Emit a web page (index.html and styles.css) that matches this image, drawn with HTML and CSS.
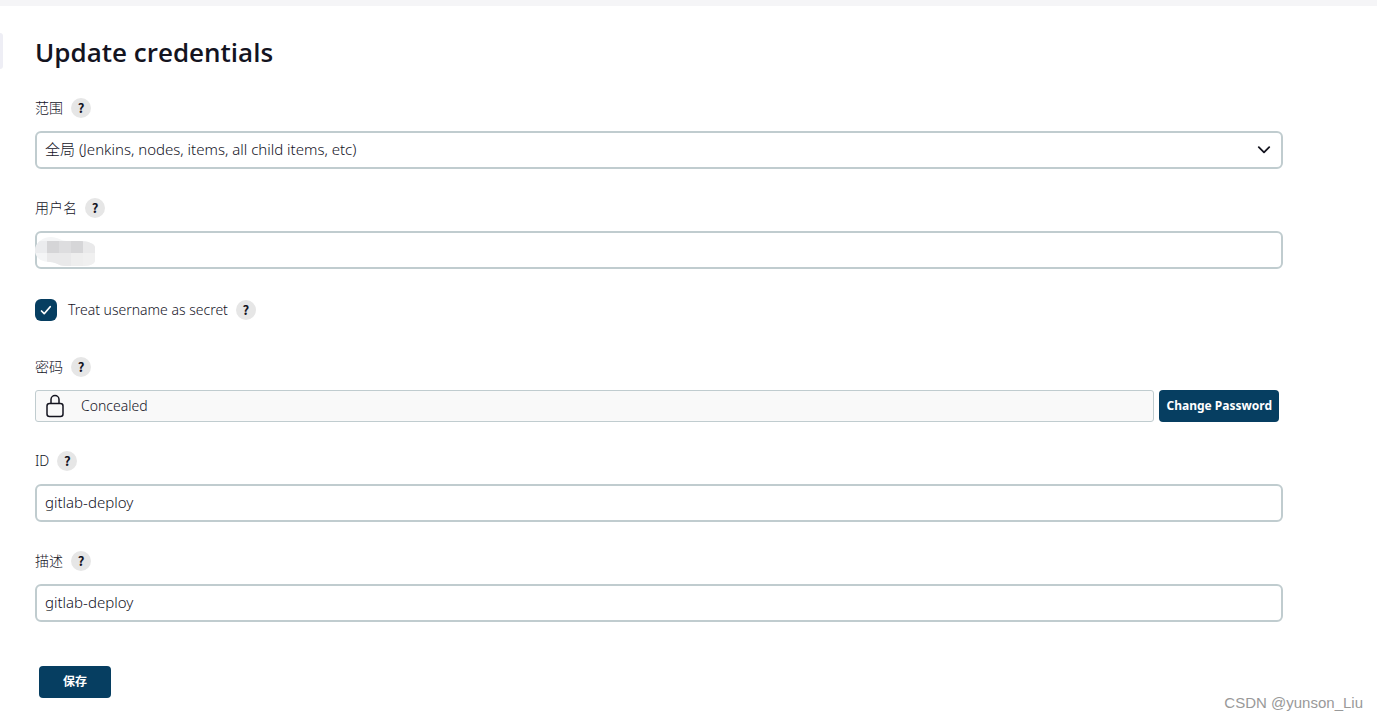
FILE: index.html
```html
<!DOCTYPE html>
<html lang="zh-CN">
<head>
<meta charset="utf-8">
<title>Update credentials</title>
<link rel="stylesheet" href="styles.css">
</head>
<body>
<div class="topbar"></div>
<div class="side-tab"></div>
<main class="page">
  <h1 class="title">Update credentials</h1>
  <form class="form">
    <div class="field">
      <div class="label-row"><label for="scope">范围</label><button type="button" class="help" aria-label="Help">?</button></div>
      <div class="control-wrap">
        <select id="scope" class="control"><option>全局 (Jenkins, nodes, items, all child items, etc)</option></select>
        <svg class="chevron" width="14" height="8" viewBox="0 0 14 8" fill="none" stroke="#14141f" stroke-width="1.8" stroke-linecap="round" stroke-linejoin="round"><path d="M1.800 1.200l5.200 5.200 5.200-5.200"/></svg>
      </div>
    </div>
    <div class="field">
      <div class="label-row"><label for="username">用户名</label><button type="button" class="help" aria-label="Help">?</button></div>
      <div class="control-wrap">
        <input id="username" class="control" type="text">
        <svg class="mosaic" width="60" height="30" viewBox="0 0 60 30">
          <defs><clipPath id="smear"><path d="M0 13C1 4 9 0 16 0c7 0 10 4 16 4h14c7 0 14 3 14 6v14c-1 4-7 5-12 5H30c-6 0-9-4-15-4C6 25 0 21 0 13z"/></clipPath></defs>
          <g clip-path="url(#smear)" shape-rendering="crispEdges">
            <path fill="#f4f5f6" d="M0 0h60v30H0z"/>
            <path fill="#ebecee" d="M0 4h12v12H0z"/>
            <path fill="#d5d5d7" d="M12 4h12v12H12z"/>
            <path fill="#dddddf" d="M24 4h12v12H24z"/>
            <path fill="#d6d6d8" d="M36 4h12v12H36z"/>
            <path fill="#e9e9ea" d="M48 4h12v12H48zM12 16h24v14H12z"/>
            <path fill="#eeeeee" d="M36 16h12v14H36z"/>
            <path fill="#f0f0f0" d="M48 16h12v14H48z"/>
          </g>
        </svg>
      </div>
    </div>
    <div class="check-row">
      <input id="secret" class="checkbox" type="checkbox" checked>
      <svg class="tick" width="22" height="22" viewBox="0 0 22 22" fill="none" stroke="#fff" stroke-width="1.7" stroke-linecap="round" stroke-linejoin="round"><path d="M6.500 12l2.700 2.700 6-7"/></svg>
      <label for="secret" class="check-label">Treat username as secret</label>
      <button type="button" class="help" aria-label="Help">?</button>
    </div>
    <div class="field">
      <div class="label-row"><label for="change">密码</label><button type="button" class="help" aria-label="Help">?</button></div>
      <div class="secret-row">
        <div class="concealed">
          <svg width="18" height="24" viewBox="0 0 18 24" fill="none" stroke="#14141f" stroke-width="1.5"><rect x="1" y="9.500" width="16" height="13" rx="2.500"/><path d="M5 9.500V5.500a4 4 0 0 1 8 0v4"/></svg>
          <span>Concealed</span>
        </div>
        <button id="change" type="button" class="btn btn-change">Change Password</button>
      </div>
    </div>
    <div class="field">
      <div class="label-row"><label for="cid">ID</label><button type="button" class="help" aria-label="Help">?</button></div>
      <input id="cid" class="control" type="text" value="gitlab-deploy">
    </div>
    <div class="field">
      <div class="label-row"><label for="desc">描述</label><button type="button" class="help" aria-label="Help">?</button></div>
      <input id="desc" class="control" type="text" value="gitlab-deploy">
    </div>
    <button type="submit" class="btn btn-save">保存</button>
  </form>
</main>
<div class="watermark">CSDN @yunson_Liu</div>
</body>
</html>
```
FILE: styles.css
```css
* { box-sizing: border-box; }
body {
  margin: 0;
  background: #fff;
  color: #14141f;
  font-family: "Noto Sans", "Noto Sans CJK SC", sans-serif;
  font-size: 14px;
  font-weight: 300;
  line-height: 20px;
}
.topbar { height: 6px; background: #f5f5f7; }
.side-tab {
  position: absolute;
  left: 0;
  top: 33px;
  width: 3px;
  height: 36px;
  background: #eeeef5;
  border-radius: 0 8px 8px 0;
}
.page { padding: 28px 94px 22px 35px; }
.title {
  margin: 0 0 28px;
  font-family: "Open Sans", "Noto Sans", sans-serif;
  font-size: 26px;
  font-weight: 600;
  line-height: 36px;
}
.field { margin-bottom: 29px; }
.label-row {
  display: flex;
  align-items: center;
  gap: 8px;
  margin-bottom: 13px;
}
.help {
  width: 20px;
  height: 20px;
  padding: 0;
  border: 0;
  border-radius: 50%;
  background: #e6e6e6;
  color: #14141f;
  font: 700 13px/20px "Noto Sans CJK SC", sans-serif;
  text-align: center;
}
.control-wrap { position: relative; }
.control {
  display: block;
  width: 100%;
  height: 38px;
  padding: 0 8px 2px;
  border: 2px solid #c0cccf;
  border-radius: 6px;
  background: #fff;
  color: inherit;
  font: inherit;
  font-size: 15px;
  appearance: none;
}
.chevron {
  position: absolute;
  right: 12px;
  top: 15px;
  pointer-events: none;
}
.mosaic {
  position: absolute;
  left: 0;
  top: 6px;
  pointer-events: none;
}
.check-row {
  position: relative;
  display: flex;
  align-items: center;
  margin: 30px 0 36px;
}
.checkbox {
  width: 22px;
  height: 22px;
  margin: 0;
  border-radius: 6px;
  background: #063e61;
  appearance: none;
}
.tick {
  position: absolute;
  left: 0;
  top: 0;
  pointer-events: none;
}
.check-label { margin: 0 8px 0 11px; }
.secret-row {
  display: flex;
  gap: 5px;
  padding-right: 4px;
}
.concealed {
  flex: 1;
  display: flex;
  align-items: center;
  gap: 17px;
  height: 32px;
  padding: 0 10px;
  border: 1px solid #c0cccf;
  border-radius: 3px;
  background: #f9f9f9;
}
.btn {
  height: 32px;
  border: 0;
  border-radius: 4px;
  background: #063e61;
  color: #fff;
  font: 700 12px/20px "Noto Sans", "Noto Sans CJK SC", sans-serif;
}
.btn-change { padding: 0 7px; }
.btn-save {
  margin: 15px 4px 0;
  padding: 0 24px;
}
.watermark {
  position: absolute;
  right: 14px;
  bottom: 7px;
  color: #999;
  font: 400 15px/20px "Liberation Sans", Arial, sans-serif;
}
```
